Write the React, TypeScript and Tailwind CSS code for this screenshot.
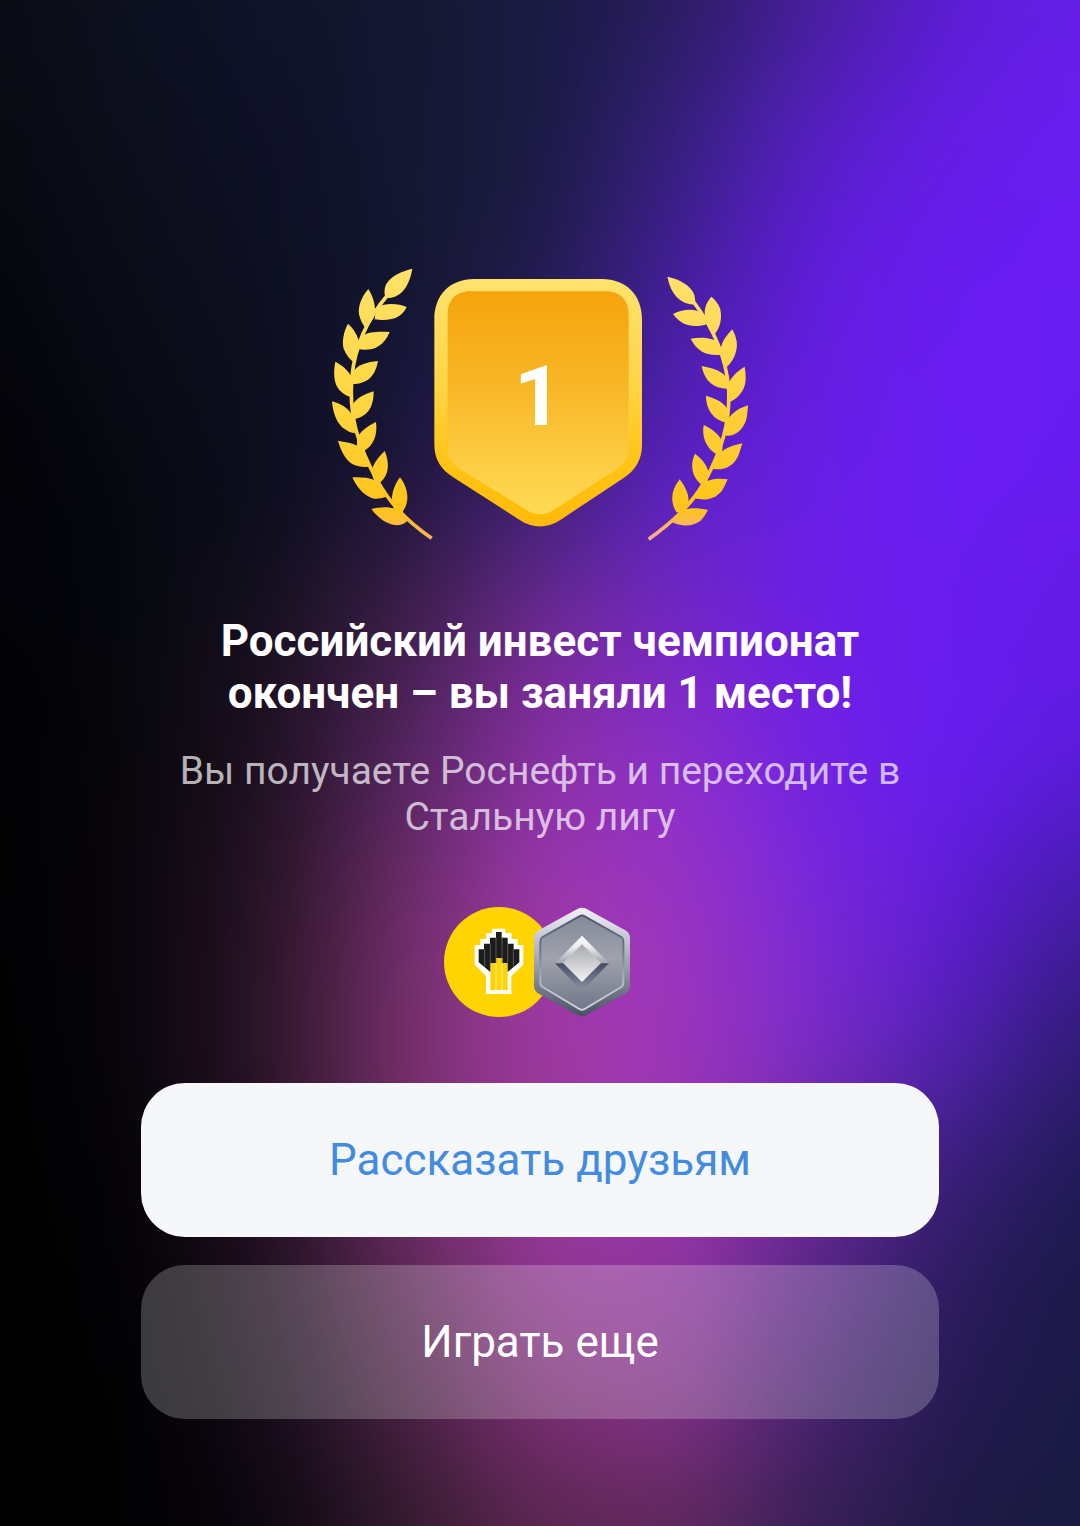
import type { ReactNode } from "react";

interface ButtonProps {
  children: ReactNode;
  className: string;
}

// Colours of the glow, one row per horizontal band, left to right
const GLOW_ROWS = [
  { y: 0, colors: ["#0b0b14", "#0d1120", "#11142b", "#14172f", "#191b42", "#2a1c5e", "#461f98", "#5c1dd2", "#641ee8"] },
  { y: 130, colors: ["#090911", "#0c0f1d", "#0f1028", "#141831", "#1a1b42", "#34207a", "#5520c0", "#641de4", "#691ef0"] },
  { y: 260, colors: ["#06060e", "#0b0d19", "#0e1023", "#14162f", "#201c4a", "#421f94", "#601dda", "#681cef", "#681cf2"] },
  { y: 400, colors: ["#040409", "#090a14", "#0d0f1f", "#17163a", "#2c1d62", "#5220b4", "#661ee2", "#691df2", "#671cef"] },
  { y: 500, colors: ["#030308", "#07080f", "#0c0d1e", "#23173c", "#44227a", "#6022c4", "#681ee8", "#691df2", "#671cee"] },
  { y: 580, colors: ["#03030a", "#06080f", "#13101f", "#371d44", "#5f2888", "#6d27c2", "#6b1ee6", "#681def", "#641ae4"] },
  { y: 660, colors: ["#020205", "#07080e", "#1a1020", "#44214e", "#7a2c98", "#7b29c8", "#6e20e4", "#681df0", "#621be6"] },
  { y: 760, colors: ["#020204", "#08070c", "#1f1122", "#552660", "#8a30a4", "#8c2fca", "#7222e2", "#661df0", "#5c1cda"] },
  { y: 880, colors: ["#010102", "#0a060d", "#281426", "#6a2c66", "#9c38ac", "#9a34c4", "#7828dc", "#631cdc", "#461cae"] },
  { y: 980, colors: ["#010102", "#09060c", "#2c1528", "#74306a", "#a03aa6", "#9e36bc", "#7c2ad0", "#5a1ec8", "#381c86"] },
  { y: 1060, colors: ["#000000", "#08060d", "#2c1528", "#76306a", "#9e3a9e", "#9e36ba", "#7a2cc6", "#5022ac", "#2e1b70"] },
  { y: 1160, colors: ["#000000", "#060409", "#281326", "#702e68", "#9c3a9c", "#9c36b4", "#6c289c", "#3c1f80", "#201b58"] },
  { y: 1260, colors: ["#000000", "#040306", "#201020", "#602a58", "#943896", "#9436a4", "#5e268c", "#2e1c64", "#1c1a4a"] },
  { y: 1430, colors: ["#000000", "#010102", "#140b18", "#43203e", "#752d6c", "#7e3080", "#44226a", "#241a50", "#1a1a44"] },
  { y: 1526, colors: ["#000000", "#010102", "#0c060f", "#321a2c", "#5a2650", "#60285c", "#381f56", "#1f1a44", "#181a40"] },
];

// Each band fades in over the one above it
const Glow = () => (
  <svg
    className="absolute inset-0 h-full w-full"
    viewBox="0 0 1080 1526"
    preserveAspectRatio="none"
    aria-hidden="true"
  >
    <defs>
      <filter id="soften" filterUnits="userSpaceOnUse" x="-200" y="-200" width="1480" height="1926" colorInterpolationFilters="sRGB">
        <feGaussianBlur stdDeviation="40" />
      </filter>
      {GLOW_ROWS.map((row, i) => {
        const from = i > 0 ? GLOW_ROWS[i - 1].y : -200;
        return (
          <g key={row.y}>
            <linearGradient id={`glow${i}`} gradientUnits="userSpaceOnUse" x1="0" x2="1080" y1="0" y2="0">
              {row.colors.map((color, j) => (
                <stop key={j} offset={j / 8} stopColor={color} />
              ))}
            </linearGradient>
            <linearGradient
              id={`fade${i}`}
              gradientUnits="userSpaceOnUse"
              x1="0"
              x2="0"
              y1={from}
              y2={row.y}
            >
              <stop offset="0" stopColor="#fff" stopOpacity={i > 0 ? 0 : 1} />
              <stop offset="1" stopColor="#fff" />
            </linearGradient>
            <mask id={`mask${i}`} maskUnits="userSpaceOnUse" x="-200" y="-200" width="1480" height="1926">
              <rect x="-200" y={from} width="1480" height={1726 - from} fill={`url(#fade${i})`} />
            </mask>
          </g>
        );
      })}
    </defs>
    <g filter="url(#soften)">
      {GLOW_ROWS.map((row, i) => (
        <rect
          key={row.y}
          x="-200"
          y="-200"
          width="1480"
          height="1926"
          fill={`url(#glow${i})`}
          mask={`url(#mask${i})`}
        />
      ))}
    </g>
  </svg>
);

const LaurelLeft = () => (
  <svg className="h-[273px] w-[102px]" viewBox="30 25 306 819" aria-hidden="true">
    <defs>
      <linearGradient id="laurelLeft" gradientUnits="userSpaceOnUse" x1="0" x2="0" y1="25" y2="844">
        <stop offset="0" stopColor="#ffe26b" />
        <stop offset="0.5" stopColor="#ffd63f" />
        <stop offset="0.88" stopColor="#ffc41a" />
        <stop offset="1" stopColor="#f5b25c" />
      </linearGradient>
    </defs>
    <path
      d="M200 106C150 165 103 245 93 350C82 470 112 560 170 665C205 725 245 775 332 836"
      fill="none"
      stroke="url(#laurelLeft)"
      strokeWidth="11"
    />
    <g fill="url(#laurelLeft)">
      <path d="M274 27C245 34 196 52 191 88Q189 106 195 115C225 117 262 98 274 27Z" />
      <path d="M142 88C124 108 110 138 114 164Q120 190 134 205C152 188 163 169 162 148C161 125 153 106 142 88Z" />
      <path d="M257 142C232 129 188 131 174 140Q162 155 161 179C199 184 239 181 257 142Z" />
      <path d="M81 192C68 216 62 246 68 267Q79 294 98 307C112 286 118 263 113 241C106 220 96 205 81 192Z" />
      <path d="M206 217C176 216 143 215 125 229Q112 246 112 269C151 275 187 264 206 217Z" />
      <path d="M43 306C36 342 39 372 55 391Q73 409 91 413C99 386 96 364 88 346C76 326 62 317 43 306Z" />
      <path d="M171 304C139 306 110 317 100 332Q92 351 94 374C139 371 161 353 171 304Z" />
      <path d="M33 425C36 462 48 489 65 504Q83 518 101 521C104 490 96 466 82 451C67 436 51 431 33 425Z" />
      <path d="M158 395C128 404 105 417 95 435Q90 455 95 480C137 472 158 447 158 395Z" />
      <path d="M51 543C62 583 80 608 102 617Q122 624 143 621C141 591 130 571 109 558C90 548 70 547 51 543Z" />
      <path d="M165 487C137 500 116 517 108 537Q106 558 112 581C151 569 171 535 165 487Z" />
      <path d="M94 653C112 693 136 711 159 717Q178 718 197 711C188 681 173 665 151 658C130 652 112 654 94 653Z" />
      <path d="M191 574C171 593 154 616 151 638Q155 657 167 676C200 657 210 619 191 574Z" />
      <path d="M151 748C178 784 208 797 231 797Q253 794 264 778C249 758 230 747 207 744C185 741 169 745 151 748Z" />
      <path d="M237 653C221 674 211 702 213 726Q218 746 222 760Q239 772 247 753C265 727 264 689 237 653Z" />
    </g>
  </svg>
);

const LaurelRight = () => (
  <svg className="h-[265px] w-[102px]" viewBox="32 48 306 795" aria-hidden="true">
    <defs>
      <linearGradient id="laurelRight" gradientUnits="userSpaceOnUse" x1="0" x2="0" y1="48" y2="843">
        <stop offset="0" stopColor="#ffe26b" />
        <stop offset="0.5" stopColor="#ffd03a" />
        <stop offset="0.88" stopColor="#ffc41a" />
        <stop offset="1" stopColor="#f8a8a0" />
      </linearGradient>
    </defs>
    <path
      d="M172 126C225 196 268 285 277 385C282 490 254 575 206 663C165 735 110 785 37 838"
      fill="none"
      stroke="url(#laurelRight)"
      strokeWidth="11"
    />
    <g fill="url(#laurelRight)">
      <path d="M93 50C134 58 164 79 174 104Q179 119 174 134C131 132 104 104 93 50Z" />
      <path d="M110 162C143 146 177 146 194 159Q206 172 209 194C167 204 135 196 110 162Z" />
      <path d="M225 110C206 132 201 154 208 176Q219 203 236 221C253 202 258 169 251 145C245 129 236 119 225 110Z" />
      <path d="M163 236C195 230 229 233 244 247Q255 263 255 284C211 288 184 276 163 236Z" />
      <path d="M288 208C267 229 252 253 253 274Q258 301 272 320C292 303 305 271 301 244Q298 225 288 208Z" />
      <path d="M196 318C235 325 257 335 268 350Q275 367 273 386C232 386 205 364 196 318Z" />
      <path d="M325 320C299 336 281 355 276 374Q273 400 280 426C310 414 329 384 328 354Q328 336 325 320Z" />
      <path d="M209 407C247 418 267 432 274 450Q277 470 271 488C232 480 209 451 209 407Z" />
      <path d="M335 436C302 447 282 463 273 482Q266 505 268 527C299 530 323 506 331 474Q334 455 335 436Z" />
      <path d="M202 495C235 510 253 529 259 550Q260 570 253 588C215 574 195 538 202 495Z" />
      <path d="M318 550C284 558 259 567 247 585Q235 605 230 627C264 632 293 617 306 587Q313 568 318 550Z" />
      <path d="M176 581C202 601 215 621 217 643Q215 663 206 680C171 662 157 621 176 581Z" />
      <path d="M274 658C243 654 216 657 199 672Q182 690 174 714C207 724 236 717 257 692Q267 675 274 658Z" />
      <path d="M130 658C151 686 159 709 156 730Q152 746 142 758L121 757C101 728 103 691 130 658Z" />
      <path d="M215 750C184 743 156 743 137 752Q118 764 106 785C136 801 169 800 193 782Q206 768 215 750Z" />
    </g>
  </svg>
);

const PlaceShield = ({ place }: { place: number }) => (
  <div className="relative mr-1 mb-[14px] h-[248px] w-[208px]">
    <svg className="h-full w-full" viewBox="40 58 624 744" aria-hidden="true">
      <defs>
        <linearGradient id="shieldRim" x1="0" x2="0" y1="0" y2="1">
          <stop offset="0" stopColor="#ffe26e" />
          <stop offset="0.4" stopColor="#ffd548" />
          <stop offset="0.75" stopColor="#ffc414" />
          <stop offset="1" stopColor="#ffba08" />
        </linearGradient>
        <linearGradient id="shieldFace" x1="0" x2="0" y1="0" y2="1">
          <stop offset="0" stopColor="#f5a40c" />
          <stop offset="0.4" stopColor="#f8b525" />
          <stop offset="1" stopColor="#ffdb55" />
        </linearGradient>
      </defs>
      <path
        d="M160 58H544C616 58 664 106 664 178V555C664 597 646 630 610 654L420 780C380 807 336 807 296 780L100 654C60 630 41 597 41 555V178C41 106 88 58 160 58Z"
        fill="url(#shieldRim)"
      />
      <path
        d="M150 95H554C598 95 624 121 624 165V562C624 590 614 611 590 627L400 750C372 768 344 768 316 750L116 627C92 611 81 590 81 562V165C81 121 106 95 150 95Z"
        fill="url(#shieldFace)"
      />
    </svg>
    <span className="absolute inset-x-0 top-[68px] text-center text-[84px] leading-[100px] font-bold">
      {place}
    </span>
  </div>
);

const RosneftLogo = () => (
  <svg className="size-[110px]" viewBox="24 21 330 330" role="img" aria-label="Роснефть">
    <circle cx="189" cy="186" r="165" fill="#ffd400" />
    <path
      d="M168 86H208V99H227V117H245V135H262V194L226 228V282H150V228L116 194V135H133V117H151V99H168Z"
      fill="#fff"
    />
    <path
      d="M128 148H144V131H162V113H180V96H197V113H215V131H233V148H250V187L215 216V190H199V174H180V190H163V216L128 187Z"
      fill="#1c1c1c"
    />
    <path d="M163 190H180V174H199V190H215V270H163Z" fill="#ffd400" />
    <path d="M146 148V200M163 131V214M180 113V190M198 113V190M215 131V214M232 148V200" stroke="#77776f" strokeWidth="2" />
    <path d="M180 190V270M198 190V270" stroke="#fff0b0" strokeWidth="3" />
  </svg>
);

const SteelLeagueBadge = () => (
  <svg className="-ml-[27px] size-[110px]" viewBox="273 22 330 330" role="img" aria-label="Стальная лига">
    <defs>
      <linearGradient id="steelRim" x1="0" x2="0" y1="0" y2="1">
        <stop offset="0" stopColor="#f2f2f8" />
        <stop offset="0.35" stopColor="#b9bcc8" />
        <stop offset="0.65" stopColor="#858a9a" />
        <stop offset="1" stopColor="#4a5064" />
      </linearGradient>
      <linearGradient id="steelEdge" x1="0" x2="0" y1="0" y2="1">
        <stop offset="0" stopColor="#4d556c" />
        <stop offset="0.4" stopColor="#747b8e" />
        <stop offset="0.7" stopColor="#b4b8c4" />
        <stop offset="1" stopColor="#d4d6de" />
      </linearGradient>
      <linearGradient id="steelFace" x1="0" x2="0" y1="0" y2="1">
        <stop offset="0" stopColor="#83899a" />
        <stop offset="0.45" stopColor="#a0a2ac" />
        <stop offset="1" stopColor="#71778a" />
      </linearGradient>
      <linearGradient id="steelTop" x1="0" x2="0" y1="0" y2="1">
        <stop offset="0" stopColor="#ffffff" />
        <stop offset="0.4" stopColor="#ececf0" />
        <stop offset="1" stopColor="#a0a2ac" />
      </linearGradient>
      <linearGradient id="steelBottom" x1="0" x2="0" y1="0" y2="1">
        <stop offset="0" stopColor="#454d66" />
        <stop offset="1" stopColor="#8d92a1" />
      </linearGradient>
      <linearGradient id="steelGem" x1="0" x2="0" y1="0" y2="1">
        <stop offset="0" stopColor="#a5a7ac" />
        <stop offset="1" stopColor="#f5f5f5" />
      </linearGradient>
    </defs>
    <path
      d="M424 28Q438 20 452 28L568 92Q582 100 582 115V259Q582 274 568 282L452 346Q438 354 424 346L308 282Q294 274 294 259V115Q294 100 308 92Z"
      fill="url(#steelRim)"
    />
    <path
      d="M430 50Q438 45 446 50L556 112Q562 116 562 124V250Q562 258 556 262L446 328Q438 333 430 328L320 262Q313 258 313 250V124Q313 116 320 112Z"
      fill="url(#steelFace)"
      stroke="url(#steelEdge)"
      strokeWidth="6"
    />
    <path d="M357 191L438 108L519 191Z" fill="url(#steelTop)" />
    <path d="M357 191H519L438 274Z" fill="url(#steelBottom)" />
    <path d="M438 134L495 190L438 247L381 190Z" fill="url(#steelGem)" />
  </svg>
);

const ActionButton = ({ children, className }: ButtonProps) => (
  <button
    type="button"
    className={`h-[154px] w-full cursor-pointer rounded-[44px] text-[44px] leading-[52px] ${className}`}
  >
    {children}
  </button>
);

const App = () => {
  return (
    <main className="relative min-h-screen bg-black font-['Roboto',sans-serif] text-white">
      <Glow />
      <div className="relative mx-auto flex max-w-[798px] flex-col items-center pt-[268px] pb-[107px] text-center">
        <div className="flex items-end justify-center gap-px">
          <LaurelLeft />
          <PlaceShield place={1} />
          <LaurelRight />
        </div>

        <h1 className="mt-[74px] max-w-[700px] text-[44px] leading-[52px] font-bold">
          Российский инвест чемпионат окончен – вы заняли 1 место!
        </h1>
        <p className="mt-[29px] text-[39px] leading-[46px] text-white/70">
          Вы получаете Роснефть и переходите в Стальную лигу
        </p>

        <div className="mt-[67px] flex items-center">
          <RosneftLogo />
          <SteelLeagueBadge />
        </div>

        <div className="mt-[66px] flex w-full flex-col gap-7">
          <ActionButton className="bg-[#f5f7f9] text-[#428be0]">Рассказать друзьям</ActionButton>
          <ActionButton className="bg-white/22">Играть еще</ActionButton>
        </div>
      </div>
    </main>
  );
};

export default App;
